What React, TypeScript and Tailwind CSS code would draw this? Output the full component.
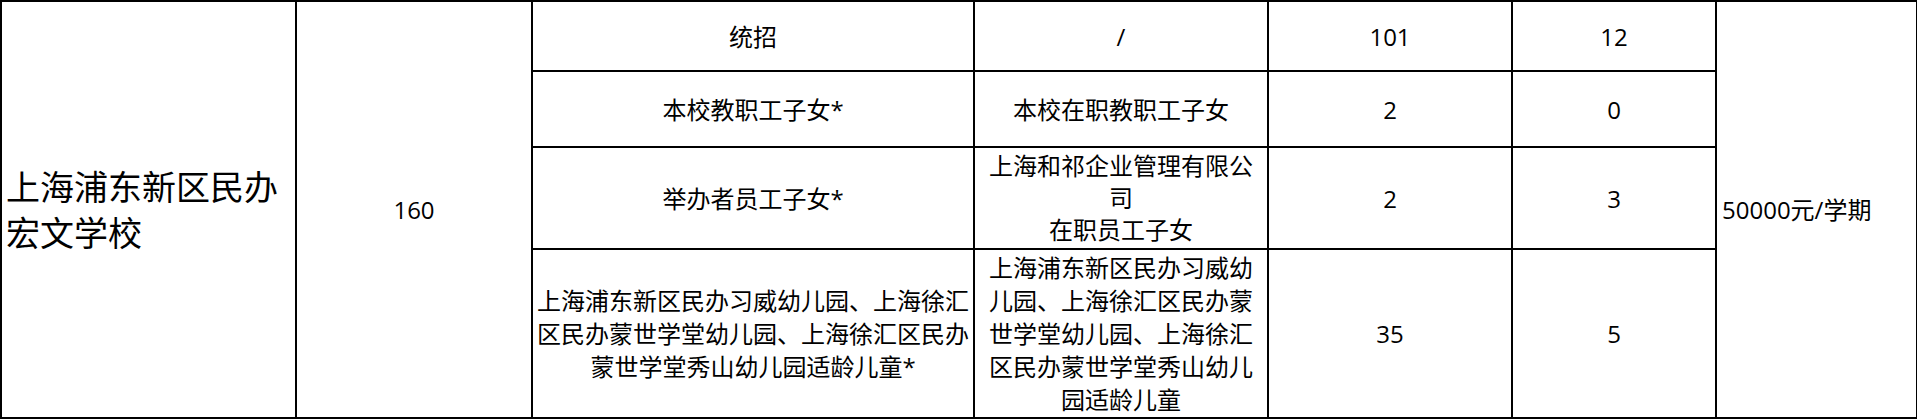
import React from "react";

const cell = "border-2 border-black align-middle p-0";

export default function App() {
  return (
    <div className="w-[1917px] h-[419px] bg-white font-['Open_Sans','Noto_Sans_CJK_SC',sans-serif] text-black">
      <table className="table-fixed border-collapse w-[1916px] h-[417px] text-[24px] leading-[33px]">
        <colgroup>
          <col className="w-[295px]" />
          <col className="w-[236px]" />
          <col className="w-[442px]" />
          <col className="w-[294px]" />
          <col className="w-[244px]" />
          <col className="w-[204px]" />
          <col className="w-[201px]" />
        </colgroup>
        <tbody>
          <tr className="h-[70px]">
            <td rowSpan={4} className={`${cell} text-left pl-[4px] text-[34px] leading-[46px]`}>
              上海浦东新区民办
              <br />
              宏文学校
            </td>
            <td rowSpan={4} className={`${cell} text-center`}>
              160
            </td>
            <td className={`${cell} text-center`}>统招</td>
            <td className={`${cell} text-center`}>/</td>
            <td className={`${cell} text-center`}>101</td>
            <td className={`${cell} text-center`}>12</td>
            <td rowSpan={4} className={`${cell} text-left pl-[5px]`}>
              50000元/学期
            </td>
          </tr>
          <tr className="h-[76px]">
            <td className={`${cell} text-center`}>本校教职工子女*</td>
            <td className={`${cell} text-center`}>本校在职教职工子女</td>
            <td className={`${cell} text-center`}>2</td>
            <td className={`${cell} text-center`}>0</td>
          </tr>
          <tr className="h-[102px]">
            <td className={`${cell} text-center`}>举办者员工子女*</td>
            <td className={`${cell} text-center leading-[32px]`}>
              上海和祁企业管理有限公
              <br />
              司
              <br />
              在职员工子女
            </td>
            <td className={`${cell} text-center`}>2</td>
            <td className={`${cell} text-center`}>3</td>
          </tr>
          <tr className="h-[169px]">
            <td className={`${cell} text-center leading-[33px]`}>
              上海浦东新区民办习威幼儿园、上海徐汇
              <br />
              区民办蒙世学堂幼儿园、上海徐汇区民办
              <br />
              蒙世学堂秀山幼儿园适龄儿童*
            </td>
            <td className={`${cell} text-center leading-[33px]`}>
              上海浦东新区民办习威幼
              <br />
              儿园、上海徐汇区民办蒙
              <br />
              世学堂幼儿园、上海徐汇
              <br />
              区民办蒙世学堂秀山幼儿
              <br />
              园适龄儿童
            </td>
            <td className={`${cell} text-center`}>35</td>
            <td className={`${cell} text-center`}>5</td>
          </tr>
        </tbody>
      </table>
    </div>
  );
}
